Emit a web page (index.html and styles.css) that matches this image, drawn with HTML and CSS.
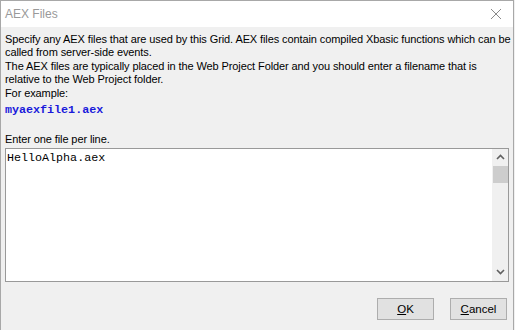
FILE: index.html
```html
<!DOCTYPE html>
<html>
<head>
<meta charset="utf-8">
<link rel="stylesheet" href="styles.css">
</head>
<body>
<div class="window">
  <div class="titlebar">
    <span class="title">AEX Files</span>
    <svg class="close" width="12" height="12" viewBox="0 0 12 12"><path d="M1 1 L11 11 M11 1 L1 11" stroke="#8a8a8a" stroke-width="1" fill="none"/></svg>
  </div>
  <div class="content">
    <p class="para">Specify any AEX files that are used by this Grid. AEX files contain compiled Xbasic functions which can be<br>called from server-side events.</p>
    <p class="para">The AEX files are typically placed in the Web Project Folder and you should enter a filename that is<br>relative to the Web Project folder.</p>
    <p class="para">For example:</p>
    <p class="code">myaexfile1.aex</p>
    <p class="para label">Enter one file per line.</p>
    <div class="editor">
      <div class="editor-text">HelloAlpha.aex</div>
      <div class="scrollbar">
        <svg class="arrow" width="9" height="6" viewBox="0 0 9 6"><path d="M1 5 L4.5 1.5 L8 5" stroke="#606060" stroke-width="1.6" fill="none"/></svg>
        <div class="thumb"></div>
        <div class="track"></div>
        <svg class="arrow" width="9" height="6" viewBox="0 0 9 6"><path d="M1 1 L4.5 4.5 L8 1" stroke="#606060" stroke-width="1.6" fill="none"/></svg>
      </div>
    </div>
    <div class="buttons">
      <button class="btn"><u>O</u>K</button>
      <button class="btn"><u>C</u>ancel</button>
    </div>
  </div>
</div>
</body>
</html>
```
FILE: styles.css
```css
html, body {
  margin: 0;
  padding: 0;
  background: #f0f0f0;
}
.window {
  width: 514px;
  height: 330px;
  box-sizing: border-box;
  border: 1px solid #a8a8a8;
  border-bottom: none;
  background: #f0f0f0;
  font-family: "Liberation Sans", Arial, sans-serif;
  font-size: 11px;
  letter-spacing: -0.1px;
  color: #000;
  display: flex;
  flex-direction: column;
}
.titlebar {
  height: 26px;
  background: #fff;
  display: flex;
  align-items: center;
  justify-content: space-between;
  padding: 0 11px 0 4px;
}
.title {
  font-size: 12px;
  letter-spacing: 0;
  color: #999;
}
.content {
  padding: 6px 4px 0 4px;
  display: flex;
  flex-direction: column;
}
.para {
  margin: 0 0 1px 0;
  line-height: 13px;
  white-space: nowrap;
}
.code {
  margin: 2px 0 0 0;
  line-height: 14px;
  font-family: "Liberation Mono", monospace;
  font-size: 11.7px;
  letter-spacing: 0;
  color: #1a1adb;
  font-weight: bold;
}
.label {
  margin-top: 16px;
}
.editor {
  margin-top: 1px;
  height: 134px;
  box-sizing: border-box;
  border: 1px solid #999;
  background: #fff;
  display: flex;
}
.editor-text {
  flex: 1;
  padding: 2px 1px;
  font-family: "Liberation Mono", monospace;
  font-size: 11.7px;
  letter-spacing: 0;
  line-height: 14px;
}
.scrollbar {
  width: 16px;
  background: #f0f0f0;
  display: flex;
  flex-direction: column;
  align-items: center;
}
.arrow {
  margin: 5px 0 6px;
}
.thumb {
  width: 15px;
  height: 17px;
  background: #cdcdcd;
}
.track {
  flex: 1;
}
.buttons {
  display: flex;
  justify-content: flex-end;
  gap: 16px;
  padding: 16px 2px 0 0;
}
.btn {
  width: 57px;
  height: 22px;
  box-sizing: border-box;
  background: #e1e1e1;
  border: 1px solid #adadad;
  font-family: "Liberation Sans", Arial, sans-serif;
  font-size: 11.5px;
  color: #000;
  padding: 0;
}
```
